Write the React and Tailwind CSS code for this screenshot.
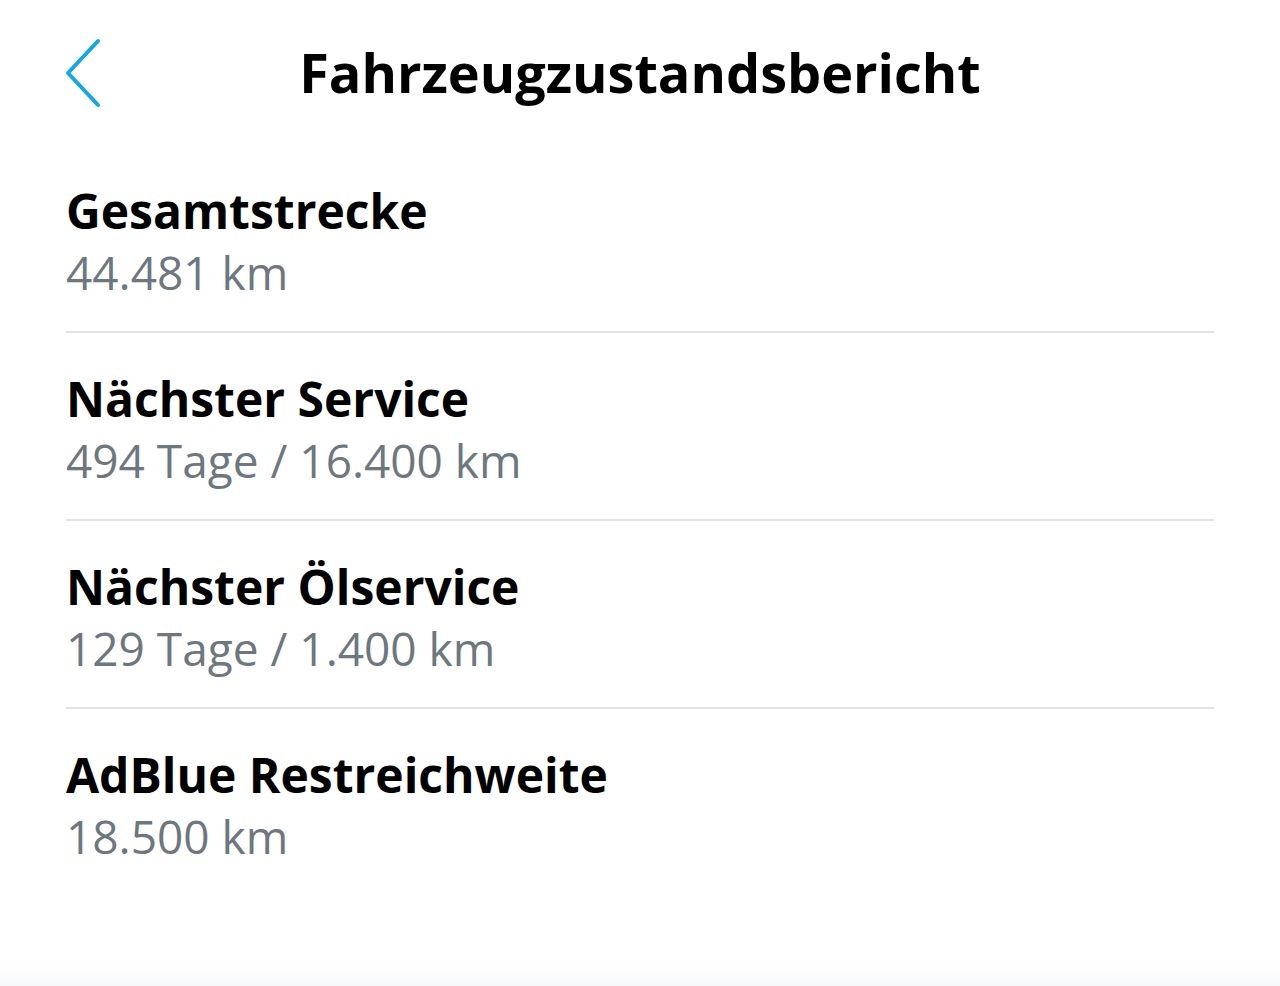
import React from "react";

const items = [
  { label: "Gesamtstrecke", value: "44.481 km" },
  { label: "Nächster Service", value: "494 Tage / 16.400 km" },
  { label: "Nächster Ölservice", value: "129 Tage / 1.400 km" },
  { label: "AdBlue Restreichweite", value: "18.500 km" },
];

function BackIcon() {
  return (
    <svg width="40" height="70" viewBox="0 0 40 70" fill="none">
      <path
        d="M34 3 L4 35 L34 67"
        stroke="#0fa9e6"
        strokeWidth="4"
        strokeLinecap="round"
        strokeLinejoin="round"
      />
    </svg>
  );
}

export default function App() {
  return (
    <div
      className="relative w-[1280px] h-[986px] bg-white overflow-hidden"
      style={{ fontFamily: '"Open Sans", sans-serif' }}
    >
      <header className="grid grid-cols-[1fr_auto_1fr] items-center h-[145px] px-[64px]">
        <div className="flex items-center">
          <BackIcon />
        </div>
        <h1 className="text-[54px] font-bold text-black">
          Fahrzeugzustandsbericht
        </h1>
        <div />
      </header>

      <div className="px-[66px]">
        {items.map((item, i) => (
          <div
            key={item.label}
            className={
              i < items.length - 1
                ? "border-b-2 border-[#e3e3e3] pt-[35px] pb-[29px]"
                : "pt-[35px] pb-[29px]"
            }
          >
            <div className="text-[48px] leading-[62px] font-bold text-black">
              {item.label}
            </div>
            <div className="text-[46px] leading-[60px] text-[#6c7780]">
              {item.value}
            </div>
          </div>
        ))}
      </div>

      <div className="absolute bottom-0 left-0 right-0 h-[22px] bg-gradient-to-b from-white to-[#f7f8fa]" />
    </div>
  );
}
